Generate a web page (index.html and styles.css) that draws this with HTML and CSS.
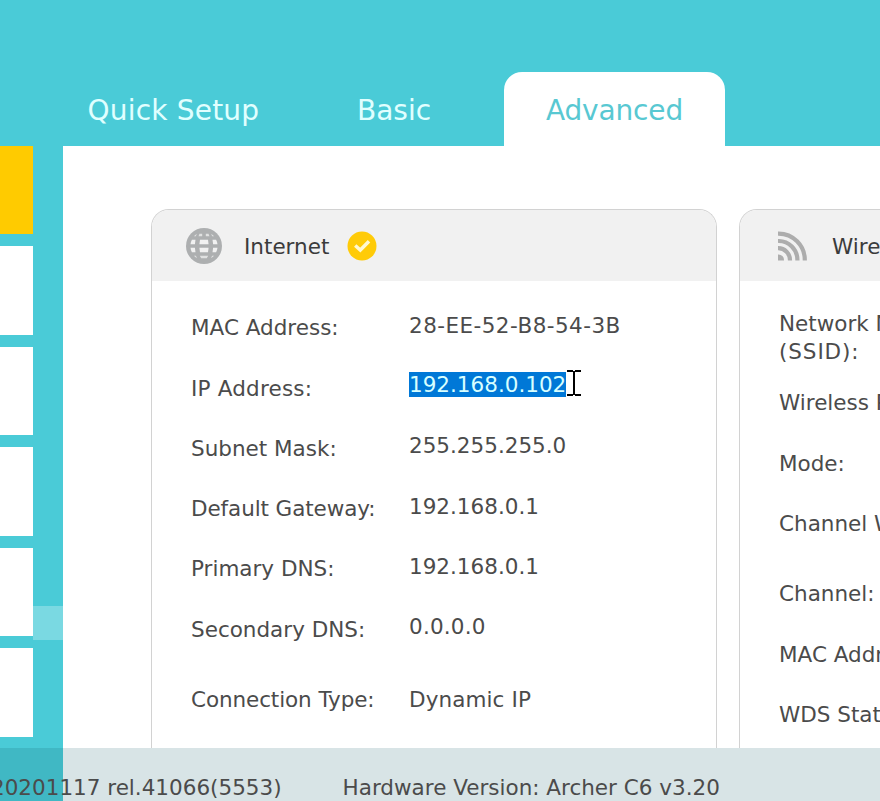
FILE: index.html
```html
<!DOCTYPE html>
<html lang="en">
<head>
<meta charset="utf-8">
<title>Router status</title>
<link rel="stylesheet" href="styles.css">
</head>
<body>
<header class="tabs">
  <a class="tab tab-quick">Quick Setup</a>
  <a class="tab tab-basic">Basic</a>
  <a class="tab tab-advanced">Advanced</a>
</header>
<div class="layout">
  <nav class="sidebar">
    <div class="item active"></div>
    <div class="item"></div>
    <div class="item"></div>
    <div class="item"></div>
    <div class="item"></div>
    <div class="item"></div>
    <div class="marker"></div>
  </nav>
  <main class="content">
    <section class="card internet">
      <div class="card-head">
        <svg class="globe" viewBox="0 0 36 36" width="36" height="36">
          <circle cx="18" cy="18" r="18" fill="#adafb0"/>
          <g fill="#f1f1f1">
            <path d="M12.500 8.200L13.500 5.800H16.200V8.200ZM19.800 8.200V5.800H22.500L23.500 8.200ZM7.800 8.200L10.800 5.800L9.900 8.200ZM28.200 8.200L25.200 5.800L26.100 8.200Z" opacity=".75"/>
            <path d="M4.500 16.200Q4.800 13.800 5.900 11.700H9.500L8.900 16.200ZM13.400 16.200L14 11.700H22L22.600 16.200ZM27.100 16.200L26.500 11.700H30.100Q31.200 13.800 31.500 16.200Z"/>
            <path d="M4.500 19.800H8.900L9.500 24.300H5.900Q4.800 22.200 4.500 19.800ZM13.400 19.800H22.600L22 24.300H14ZM27.100 19.800H31.500Q31.200 22.200 30.100 24.300H26.500Z"/>
            <path d="M13.800 27.800H22.200L20.800 30.200H15.200ZM7.800 27.800H10L10.900 30.200ZM28.200 27.800H26L25.100 30.200Z" opacity=".75"/>
          </g>
        </svg>
        <span class="title">Internet</span>
        <svg class="check" viewBox="0 0 30 30" width="30" height="30">
          <circle cx="15" cy="15" r="14.500" fill="#ffcb08"/>
          <path d="M8.200 14.500L13.300 19L22 10.300" fill="none" stroke="#fff8d2" stroke-width="3.500"/>
        </svg>
      </div>
      <dl class="rows">
        <dt>MAC Address:</dt><dd class="mac">28-EE-52-B8-54-3B</dd>
        <dt class="ip">IP Address:</dt><dd class="ip-value"><mark>192.168.0.102</mark></dd>
        <dt class="mask">Subnet Mask:</dt><dd>255.255.255.0</dd>
        <dt class="gateway">Default Gateway:</dt><dd>192.168.0.1</dd>
        <dt>Primary DNS:</dt><dd>192.168.0.1</dd>
        <dt class="secondary">Secondary DNS:</dt><dd class="secondary-value">0.0.0.0</dd>
        <dt class="type">Connection Type:</dt><dd class="type-value">Dynamic IP</dd>
      </dl>
    </section>
    <section class="card wireless">
      <div class="card-head">
        <svg class="waves" viewBox="0 0 29 30" width="29" height="30" fill="none" stroke="#adadad" stroke-width="4.200">
          <path d="M0 2.600A26.300 26.400 0 0 1 26.800 29.500"/>
          <path d="M0 10A18.700 19 0 0 1 19.400 29.500"/>
          <path d="M0 17.200A11.800 12 0 0 1 12 29.500"/>
          <path d="M0 23.500A5.500 5.500 0 0 1 6 29.500H0Z" fill="#adadad" stroke="none"/>
        </svg>
        <span class="title">Wireless</span>
      </div>
      <div class="list">
        <p class="name">Network Name<br><span class="ssid">(SSID):</span></p>
        <p>Wireless Radio:</p>
        <p>Mode:</p>
        <p>Channel Width:</p>
        <p class="gap">Channel:</p>
        <p>MAC Address:</p>
        <p>WDS Status:</p>
      </div>
    </section>
  </main>
</div>
<footer class="footer">
  <span class="firmware">20201117 rel.41066(5553)</span>
  <span class="hardware">Hardware Version: Archer C6 v3.20</span>
</footer>
<svg class="cursor" viewBox="0 0 14 26" width="14" height="26" fill="none" stroke="#000" stroke-width="2">
  <path d="M0 1H6M8 1H14M7 1V25M0 25H6M8 25H14"/>
</svg>
</body>
</html>
```
FILE: styles.css
```css
* { box-sizing: border-box; }
body {
  margin: 0;
  width: 880px;
  height: 801px;
  overflow: hidden;
  background: #4acbd7;
  color: #4b4b4b;
  font: 21.5px/28px "DejaVu Sans", Verdana, sans-serif;
  white-space: nowrap;
}
.tabs {
  height: 146px;
  padding-top: 72px;
  display: flex;
  font-size: 28px;
  color: #e0ffff;
}
.tab { height: 74px; line-height: 77px; }
.tab-quick { margin-left: 87.5px; width: 269.5px; letter-spacing: .2px; }
.tab-basic { width: 147px; }
.tab-advanced {
  width: 221px;
  text-align: center;
  letter-spacing: -.15px;
  background: #fff;
  color: #58c8d2;
  border-radius: 18px 18px 0 0;
}
.layout { display: flex; height: 655px; }
.sidebar { position: relative; width: 63px; flex: none; }
.item { width: 33px; height: 88.3px; margin-bottom: 12.2px; background: #fff; }
.item.active { background: #ffcb00; }
.marker {
  position: absolute;
  left: 33px;
  top: 460px;
  width: 30px;
  height: 34px;
  background: #7ad9e2;
}
.content {
  flex: none;
  width: 817px;
  padding: 63px 0 0 88px;
  display: flex;
  gap: 22px;
  background: #fff;
  overflow: hidden;
}
.card {
  width: 566px;
  height: 539px;
  flex: none;
  border: 1px solid #d2d2d2;
  border-bottom: 0;
  border-radius: 18px 18px 0 0;
  overflow: hidden;
}
.card-head {
  display: flex;
  align-items: center;
  height: 71px;
  padding-left: 34px;
  background: #f1f1f1;
  color: #3b3b3b;
}
.globe { margin-right: 22px; }
.title { line-height: 28px; padding-top: 2px; }
.check { margin-left: 18px; }
.waves { margin: 0 25px 0 4px; }
.rows {
  display: grid;
  grid-template-columns: 218px 1fr;
  grid-template-rows: repeat(6, 60.2px) 60px;
  margin: 0;
  padding: 31px 0 0 39px;
}
dt { padding-top: 2px; }
dd { margin: 0; }
.mac { letter-spacing: .45px; }
.ip { padding-top: 3px; letter-spacing: .2px; }
.ip-value { margin-top: -1px; }
.mask { padding-top: 3px; }
.gateway { letter-spacing: -.1px; }
.secondary { padding-top: 3px; }
.secondary-value { letter-spacing: .2px; }
.type { padding-top: 13px; letter-spacing: -.1px; }
.type-value { padding-top: 13px; letter-spacing: .1px; }
mark { background: #0078d7; color: #d8ffff; }
.list { padding: 29px 0 0 39px; }
.list p { margin: 0 0 32.500px; }
.list .name { margin-bottom: 23px; }
.list .gap { margin-top: 42px; }
.ssid { letter-spacing: .9px; }
.footer {
  position: absolute;
  left: 0;
  top: 748px;
  width: 880px;
  height: 53px;
  padding-top: 26px;
  display: flex;
  background: rgba(12, 88, 98, .16);
}
.firmware { margin-left: -9px; }
.hardware { margin-left: 61px; }
.cursor { position: absolute; left: 567px; top: 370px; }
```
